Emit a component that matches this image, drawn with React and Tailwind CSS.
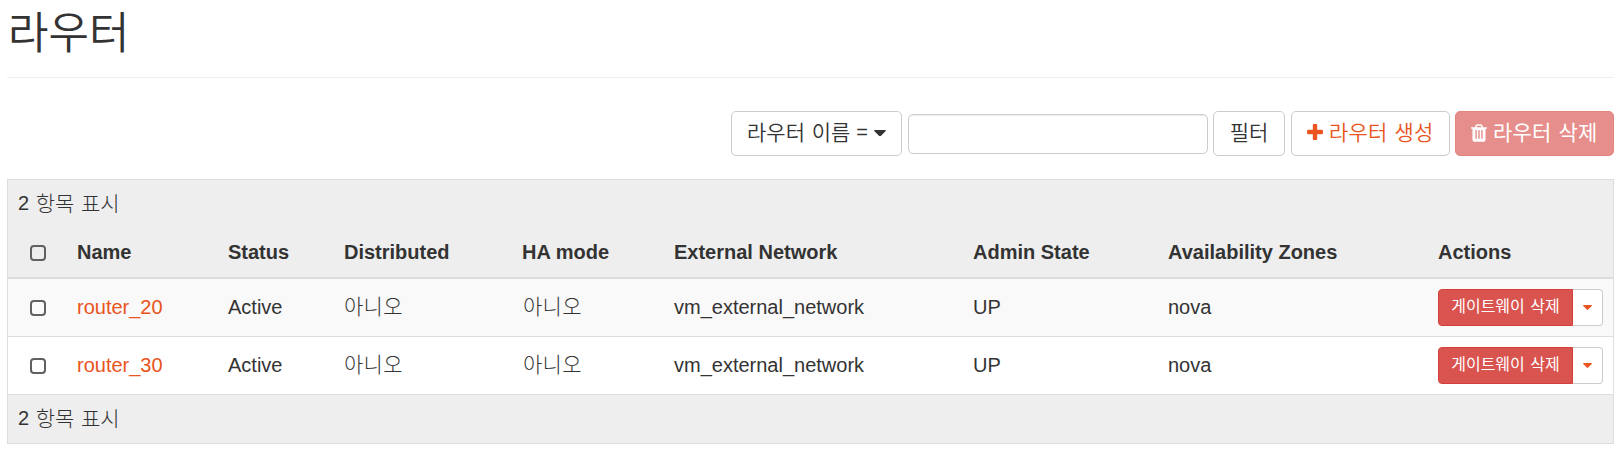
import React from "react";

const COLS =
  "grid grid-cols-[69px_151px_116px_178px_152px_299px_195px_270px_1fr] items-center";

const KO = "font-['Noto_Sans_CJK_KR'] font-light [word-spacing:2px]";

function PlusIcon() {
  return (
    <svg viewBox="192 128 1408 1408" className="mt-[3px] size-4 shrink-0 fill-current">
      <path d="M1600 736v192q0 40-28 68t-68 28h-416v416q0 40-28 68t-68 28h-192q-40 0-68-28t-28-68v-416h-416q-40 0-68-28t-28-68v-192q0-40 28-68t68-28h416v-416q0-40 28-68t68-28h192q40 0 68 28t28 68v416h416q40 0 68 28t28 68z" />
    </svg>
  );
}

function TrashIcon() {
  return (
    <svg viewBox="192 128 1408 1536" className="mt-[5px] h-[18px] w-[16px] shrink-0 fill-current">
      <path d="M704 1376v-704q0-14-9-23t-23-9h-64q-14 0-23 9t-9 23v704q0 14 9 23t23 9h64q14 0 23-9t9-23zm256 0v-704q0-14-9-23t-23-9h-64q-14 0-23 9t-9 23v704q0 14 9 23t23 9h64q14 0 23-9t9-23zm256 0v-704q0-14-9-23t-23-9h-64q-14 0-23 9t-9 23v704q0 14 9 23t23 9h64q14 0 23-9t9-23zm-544-992h448l-48-117q-7-9-17-11h-317q-10 2-17 11zm928 32v64q0 14-9 23t-23 9h-96v948q0 83-47 143.5t-113 60.5h-832q-66 0-113-58.5t-47-141.5v-952h-96q-14 0-23-9t-9-23v-64q0-14 9-23t23-9h309l70-167q15-37 54-63t79-26h320q40 0 79 26t54 63l70 167h309q14 0 23 9t9 23z" />
    </svg>
  );
}

function Caret({ className }) {
  return (
    <svg viewBox="0 0 1024 576" className={`shrink-0 fill-current ${className}`}>
      <path d="M1024 64q0 26-19 45l-448 448q-19 19-45 19t-45-19l-448-448q-19-19-19-45t19-45 45-19h896q26 0 45 19t19 45z" />
    </svg>
  );
}

function Checkbox() {
  return (
    <input
      type="checkbox"
      className="ml-[22px] mt-px block size-4 appearance-none rounded-[4px] border-2 border-[#606060]"
    />
  );
}

function Row({ name, shade }) {
  return (
    <div className={`${COLS} h-[57px] ${shade}`}>
      <Checkbox />
      <a className="pb-0.5 text-[#e95420]">{name}</a>
      <span className="pb-0.5">Active</span>
      <span className={`${KO} pb-[6px] text-[21px] tracking-[0.3px]`}>아니오</span>
      <span className={`${KO} pb-[6px] pl-px text-[21px] tracking-[0.3px]`}>아니오</span>
      <span className="pb-0.5">vm_external_network</span>
      <span className="pb-0.5">UP</span>
      <span className="pb-0.5">nova</span>
      <div className="flex h-[37px]">
        <button
          className={`${KO} flex w-[135px] items-center justify-center rounded-l-[4px] border border-[#d43f3a] bg-[#d9534f] pb-[5px] text-[16px] font-normal leading-5 whitespace-nowrap text-white`}
        >
          게이트웨이 삭제
        </button>
        <button className="flex w-[30px] items-center justify-center rounded-r-[4px] border border-l-0 border-[#ccc] bg-white text-[#e95420]">
          <Caret className="h-[5px] w-[9px]" />
        </button>
      </div>
    </div>
  );
}

function Summary() {
  return (
    <div className="flex h-12 items-center pb-[3px] pl-[10px] whitespace-pre">
      <span className="pt-px">2 </span>
      <span className={`${KO} pb-0.5 pl-px text-[21px]`}>항목 표시</span>
    </div>
  );
}

const BUTTON = `${KO} flex h-[45px] items-center rounded-[5px] border pb-[6px] text-[21px] leading-7 whitespace-nowrap`;

export default function App() {
  return (
    <div className="h-[465px] w-[1614px] overflow-hidden bg-white pl-[7px] font-['Liberation_Sans','Noto_Sans_CJK_KR',sans-serif] text-[20px] leading-7 text-[#333]">
      <header className="h-[78px] border-b border-[#eee]">
        <h1 className="pl-px font-['Noto_Sans_CJK_KR'] text-[44px] leading-[60px] font-[350]">
          라우터
        </h1>
      </header>

      <div className="mt-[33px] flex items-center justify-end">
        <button className={`${BUTTON} w-[171px] border-[#ccc] bg-white pl-[15px]`}>
          <span className="font-[350]">라우터 이름</span>
          <span className="ml-[6px] mt-[3px] font-['Liberation_Sans'] text-[20px]">=</span>
          <Caret className="ml-[6px] mt-[5px] h-[6.5px] w-[12px]" />
        </button>
        <input className="ml-[6px] h-10 w-[300px] rounded-[5px] border border-[#ccc] bg-white shadow-[inset_0_1px_1px_rgba(0,0,0,0.075)]" />
        <button className={`${BUTTON} ml-[5px] w-[72px] justify-center border-[#ccc] bg-white`}>
          <span className="font-[350]">필터</span>
        </button>
        <button className={`${BUTTON} ml-[6px] w-[159px] border-[#ccc] bg-white pl-[15px] text-[#e95420]`}>
          <PlusIcon />
          <span className="ml-[6px] font-[350] tracking-[0.2px]">라우터 생성</span>
        </button>
        <button className={`${BUTTON} ml-[5px] w-[159px] border-[#e48582] bg-[#e68e8b] pl-[15px] text-white`}>
          <TrashIcon />
          <span className="ml-[6px] font-normal tracking-[0.2px]">라우터 삭제</span>
        </button>
      </div>

      <section className="mt-[23px] border border-[#ddd]">
        <div className="h-[99px] border-b-2 border-[#ddd] bg-[#eee]">
          <Summary />
          <div className={`${COLS} h-[49px] font-bold`}>
            <Checkbox />
            <span className="pb-0.5">Name</span>
            <span className="pb-0.5">Status</span>
            <span className="pb-0.5">Distributed</span>
            <span className="pb-0.5">HA mode</span>
            <span className="pb-0.5">External Network</span>
            <span className="pb-0.5">Admin State</span>
            <span className="pb-0.5">Availability Zones</span>
            <span className="pb-0.5">Actions</span>
          </div>
        </div>
        <Row name="router_20" shade="bg-[#f9f9f9]" />
        <div className="h-px bg-[#ddd]" />
        <Row name="router_30" shade="bg-white" />
        <div className="border-t border-[#ddd] bg-[#eee]">
          <Summary />
        </div>
      </section>
    </div>
  );
}
